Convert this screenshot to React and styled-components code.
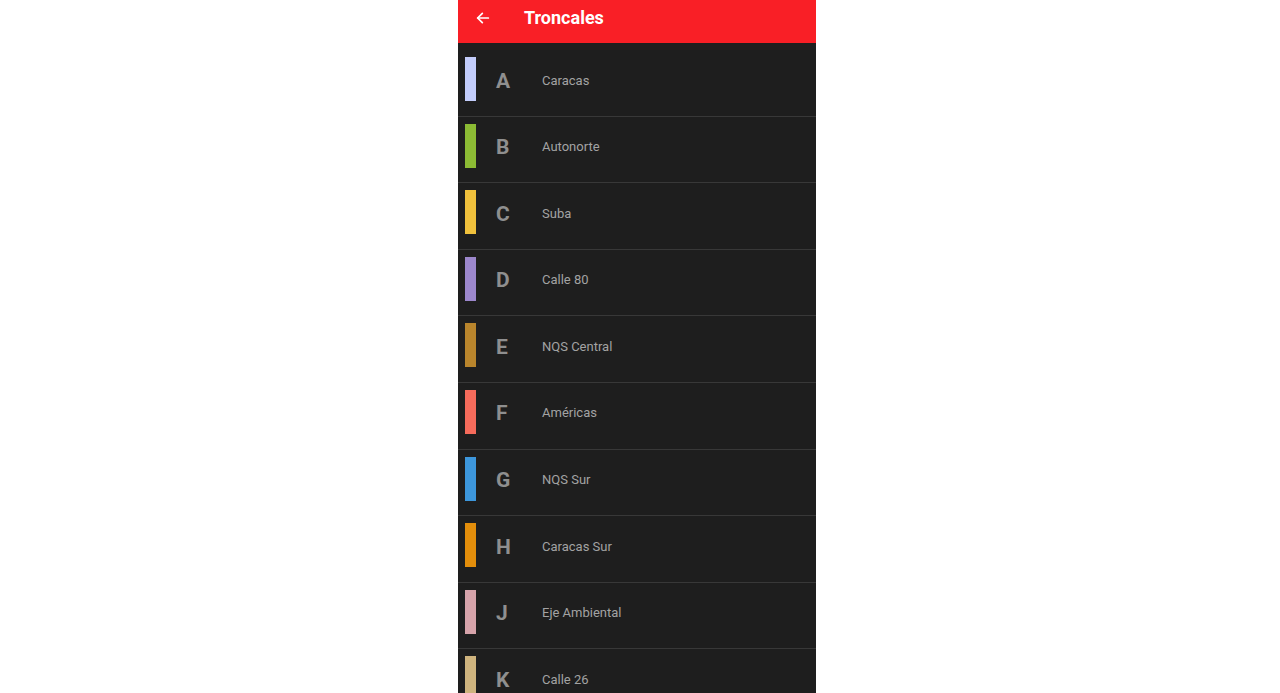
import React from "react";
import styled, { createGlobalStyle } from "styled-components";

const Global = createGlobalStyle`
  html, body { margin: 0; padding: 0; background: #ffffff; }
  body { font-family: Roboto, "Noto Sans", sans-serif; }
`;

const Page = styled.div`
  display: flex;
  justify-content: center;
  height: 693px;
  overflow: hidden;
`;

const Phone = styled.div`
  width: 358px;
  margin-left: -6px;
  background: #1e1e1e;
  display: flex;
  flex-direction: column;
  height: 693px;
  overflow: hidden;
`;

const Header = styled.header`
  height: 43px;
  flex: 0 0 43px;
  background: #f91f26;
  display: flex;
  align-items: flex-start;
  box-sizing: border-box;
  padding-top: 6px;
`;

const BackButton = styled.div`
  width: 66px;
  height: 24px;
  display: flex;
  align-items: center;
  padding-left: 17px;
  box-sizing: border-box;
`;

const Title = styled.h1`
  margin: 0;
  color: #ffffff;
  font-size: 18px;
  font-weight: 700;
  line-height: 24px;
`;

const List = styled.ul`
  list-style: none;
  margin: 0;
  padding: 7px 0 0;
`;

const Item = styled.li`
  display: flex;
  align-items: center;
  padding: 7px 0 14.6px 7px;
  border-bottom: 1px solid #383838;
`;

const Bar = styled.span`
  width: 11px;
  height: 44px;
  background: ${(p) => p.$color};
  flex: 0 0 11px;
`;

const Letter = styled.span`
  width: 66px;
  padding: 3px 0 0 20px;
  box-sizing: border-box;
  color: #8f8f8f;
  font-size: 21px;
  font-weight: 700;
  line-height: 24px;
`;

const Label = styled.span`
  padding-top: 3px;
  color: #a3a3a3;
  font-size: 13px;
  line-height: 18px;
`;

const troncales = [
  ["A", "Caracas", "#c3cdfb"],
  ["B", "Autonorte", "#8cbb34"],
  ["C", "Suba", "#f0c13c"],
  ["D", "Calle 80", "#9c87cc"],
  ["E", "NQS Central", "#b9852c"],
  ["F", "Américas", "#f66b5b"],
  ["G", "NQS Sur", "#3d97dc"],
  ["H", "Caracas Sur", "#e38e0b"],
  ["J", "Eje Ambiental", "#d6a3aa"],
  ["K", "Calle 26", "#cfb47e"],
];

export default function App() {
  return (
    <>
      <Global />
      <Page>
        <Phone>
          <Header>
            <BackButton>
              <svg width="16" height="16" viewBox="0 0 24 24" fill="none" stroke="#fff" strokeWidth="2.6" strokeLinecap="round" strokeLinejoin="round">
                <path d="M20 12H4" />
                <path d="M11 5l-7 7 7 7" />
              </svg>
            </BackButton>
            <Title>Troncales</Title>
          </Header>
          <List>
            {troncales.map(([l, name, c]) => (
              <Item key={l}>
                <Bar $color={c} />
                <Letter>{l}</Letter>
                <Label>{name}</Label>
              </Item>
            ))}
          </List>
        </Phone>
      </Page>
    </>
  );
}
